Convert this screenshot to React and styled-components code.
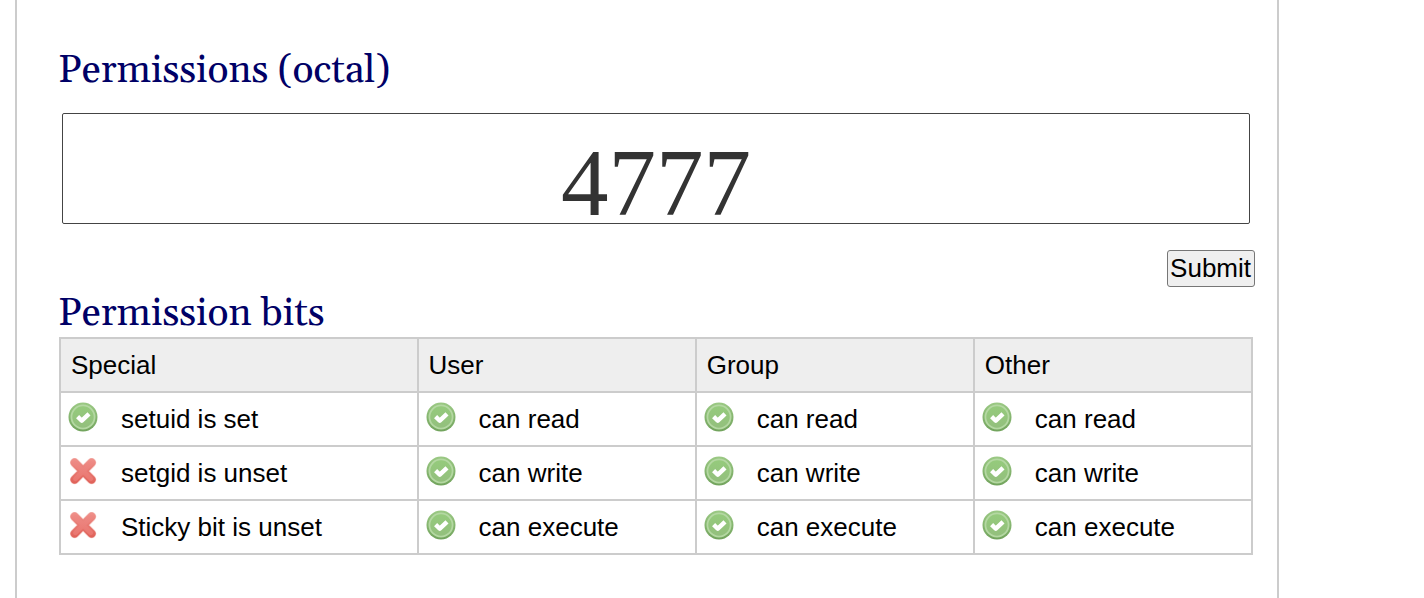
import React, { useState } from "react";
import styled, { createGlobalStyle } from "styled-components";

const GlobalStyle = createGlobalStyle`
  html,
  body,
  #root {
    height: 100%;
  }

  body {
    margin: 0;
    background: #fff;
    color: #000;
    font-family: "Liberation Sans", Arial, sans-serif;
    font-size: 26px;
  }
`;

const Page = styled.main`
  box-sizing: border-box;
  min-height: 100%;
  margin: 0 145px 0 15px;
  padding: 44px 24px 40px 41px;
  border: 2px solid #ccc;
  border-width: 0 2px;
`;

const Title = styled.h2`
  margin: 0;
  padding-top: 4px;
  color: #000066;
  font-family: Georgia, Gelasio, "Liberation Serif", serif;
  font-size: 39px;
  font-weight: normal;
  line-height: 46px;
`;

const Form = styled.form`
  display: flex;
  flex-direction: column;
  align-items: flex-end;
  gap: 26px;
`;

const TitleLabel = styled.label`
  display: block;
`;

const OctalInput = styled.input`
  box-sizing: border-box;
  align-self: stretch;
  height: 111px;
  margin: 19px 3px 0 4px;
  padding: 28px 0 0;
  border: 1px solid #444;
  border-radius: 2px;
  background: #fff;
  color: #333;
  font-family: "Liberation Serif", "Times New Roman", serif;
  font-size: 95px;
  text-align: center;
`;

const SubmitButton = styled.button`
  height: 37px;
  margin: 0 -2px 0 0;
  padding: 0 3px 2px 2px;
  border: 1px solid #767676;
  border-radius: 3px;
  background: #efefef;
  color: #000;
  font-family: inherit;
  font-size: 26px;
  line-height: 32px;
`;

const BitsTable = styled.table`
  width: calc(100% - 1px);
  margin-left: 1px;
  border-collapse: collapse;
  table-layout: fixed;
`;

const HeadCell = styled.th`
  box-sizing: border-box;
  width: ${(props) => (props.$wide ? "30%" : "auto")};
  height: 54px;
  padding: 0 10px;
  border: 2px solid #ccc;
  background: #eee;
  font-weight: normal;
  text-align: left;
`;

const Cell = styled.td`
  box-sizing: border-box;
  height: 54px;
  padding: 0 7px;
  border: 2px solid #ccc;
`;

const Bit = styled.div`
  display: flex;
  align-items: center;
  gap: 23px;
`;

const Icon = styled.svg`
  flex: none;
  width: 30px;
  height: 30px;
  margin-bottom: 4px;
`;

function SetIcon() {
  return (
    <Icon viewBox="0 0 30 30" aria-hidden="true">
      <circle cx="15" cy="15" r="14.5" fill="url(#green-rim)" />
      <circle cx="15" cy="15" r="11.6" fill="url(#green-face)" stroke="#b4d8a2" strokeWidth="1.8" />
      <path
        d="M9.6 14.6l4.2 4.1 7.2-6.9"
        fill="none"
        stroke="#fff"
        strokeWidth="4.4"
        strokeLinejoin="round"
      />
    </Icon>
  );
}

function UnsetIcon() {
  return (
    <Icon viewBox="0 0 30 30" aria-hidden="true">
      <g fill="none" strokeLinecap="round">
        <path d="M6.6 6.6l17 17M23.6 6.6l-17 17" stroke="#f7cdc9" strokeWidth="9.4" />
        <path d="M6.6 6.6l17 17M23.6 6.6l-17 17" stroke="url(#red-edge)" strokeWidth="8" />
        <path d="M7.4 7.4l15.4 15.4M22.8 7.4L7.4 22.8" stroke="url(#red-face)" strokeWidth="4.6" />
      </g>
    </Icon>
  );
}

// gradients shared by all the icons in the table
function IconDefs() {
  return (
    <svg width="0" height="0" display="block" aria-hidden="true">
      <defs>
        <linearGradient id="green-rim" x1="0" y1="0" x2="0" y2="1">
          <stop offset="0" stopColor="#9bc984" />
          <stop offset="1" stopColor="#71a35c" />
        </linearGradient>
        <linearGradient id="green-face" x1="0" y1="0" x2="0" y2="1">
          <stop offset="0" stopColor="#95cb7c" />
          <stop offset="1" stopColor="#93bf7d" />
        </linearGradient>
        <linearGradient id="red-edge" gradientUnits="userSpaceOnUse" x1="0" y1="2" x2="0" y2="28">
          <stop offset="0" stopColor="#f0928c" />
          <stop offset="1" stopColor="#df6057" />
        </linearGradient>
        <linearGradient id="red-face" gradientUnits="userSpaceOnUse" x1="0" y1="2" x2="0" y2="28">
          <stop offset="0" stopColor="#ee8d88" />
          <stop offset="1" stopColor="#e9736c" />
        </linearGradient>
      </defs>
    </svg>
  );
}

const groups = ["Special", "User", "Group", "Other"];

const special = [
  { mask: 0o4000, name: "setuid" },
  { mask: 0o2000, name: "setgid" },
  { mask: 0o1000, name: "Sticky bit" },
];

const actions = ["read", "write", "execute"];

function getRows(mode) {
  return special.map((bit, row) => {
    const isSet = (mode & bit.mask) !== 0;
    const cells = [
      { on: isSet, text: `${bit.name} is ${isSet ? "set" : "unset"}` },
    ];
    [6, 3, 0].forEach((shift) => {
      const on = ((mode >> shift) & (4 >> row)) !== 0;
      cells.push({ on, text: `${on ? "can" : "cannot"} ${actions[row]}` });
    });
    return cells;
  });
}

export default function App() {
  const [value, setValue] = useState("4777");
  const [mode, setMode] = useState(0o4777);

  const handleSubmit = (e) => {
    e.preventDefault();
    const next = parseInt(value, 8);
    if (!Number.isNaN(next)) {
      setMode(next);
    }
  };

  return (
    <>
      <GlobalStyle />
      <Page>
        <IconDefs />
        <Title>
          <TitleLabel htmlFor="octal">Permissions (octal)</TitleLabel>
        </Title>
        <Form onSubmit={handleSubmit}>
          <OctalInput
            id="octal"
            type="text"
            value={value}
            onChange={(e) => setValue(e.target.value)}
          />
          <SubmitButton type="submit">Submit</SubmitButton>
        </Form>
        <Title>Permission bits</Title>
        <BitsTable>
          <thead>
            <tr>
              {groups.map((group, i) => (
                <HeadCell key={group} scope="col" $wide={i === 0}>
                  {group}
                </HeadCell>
              ))}
            </tr>
          </thead>
          <tbody>
            {getRows(mode).map((cells, row) => (
              <tr key={row}>
                {cells.map((cell, i) => (
                  <Cell key={groups[i]}>
                    <Bit>
                      {cell.on ? <SetIcon /> : <UnsetIcon />}
                      {cell.text}
                    </Bit>
                  </Cell>
                ))}
              </tr>
            ))}
          </tbody>
        </BitsTable>
      </Page>
    </>
  );
}
